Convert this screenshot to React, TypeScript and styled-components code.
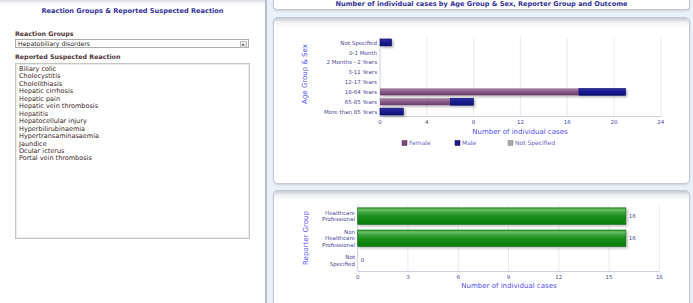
import React from 'react'
import styled, {createGlobalStyle} from 'styled-components'

const GlobalStyle = createGlobalStyle`
  html, body {
    margin: 0;
    padding: 0;
    background: #e9f1fa;
  }
  body {
    font-family: 'DejaVu Sans', Verdana, sans-serif;
    overflow: hidden;
  }
`

const Page = styled.div`
  display: flex;
  width: 693px;
  height: 303px;
  background: #e9f1fa;
  overflow: hidden;
`

const LeftPanel = styled.aside`
  width: 265px;
  flex-shrink: 0;
  display: flex;
  flex-direction: column;
  background: linear-gradient(#d6dae3 0, #fff 4px);
  border-right: 2px solid #b3bdcc;
`

const PanelTitle = styled.h2`
  margin: 0;
  font-size: 6.6px;
  line-height: 10px;
  font-weight: bold;
  color: #333399;
  text-align: center;
  white-space: nowrap;
`

const LeftTitle = styled(PanelTitle)`
  padding-top: 6px;
`

const Form = styled.div`
  display: flex;
  flex-direction: column;
  padding: 14px 0 0 15px;
`

const FieldLabel = styled.label<{$gap?: number}>`
  display: block;
  margin-top: ${({$gap}) => $gap ?? 0}px;
  font-size: 6.3px;
  line-height: 8px;
  font-weight: bold;
  color: #4e3636;
`

const SelectBox = styled.div`
  position: relative;
  width: 230px;
  height: 7px;
  margin-top: 1px;
  padding-left: 2px;
  border: 1px solid #a9a9a9;
  background: #fff;
  font-size: 6.2px;
  line-height: 7px;
  color: #2b1f1f;
`

const SelectArrow = styled.span`
  position: absolute;
  right: 1px;
  top: 1px;
  width: 5px;
  height: 5px;
  border: 1px solid #b8b8b8;
  background: linear-gradient(#f4f4f4, #d4d4d4);

  &::after {
    content: '';
    position: absolute;
    left: 1px;
    top: 2px;
    border-left: 1.5px solid transparent;
    border-right: 1.5px solid transparent;
    border-top: 2px solid #222;
  }
`

const ListBox = styled.ul`
  width: 230px;
  height: 172px;
  margin: 2px 0 0;
  padding: 2px 0 0 3px;
  list-style: none;
  border: 1px solid #c6c6c6;
  box-shadow: inset 0 0 0 1px #ececec;
  background: #fff;
`

const ListItem = styled.li`
  font-size: 6.5px;
  line-height: 7.45px;
  color: #3a2626;
  white-space: nowrap;
`

const RightColumn = styled.main`
  display: flex;
  flex-direction: column;
  width: 417px;
  margin-left: 6px;
`

const HeaderCard = styled.header`
  height: 11px;
  background: #fff;
  border: 1px solid #c3c8d2;
  border-top: none;
  border-radius: 0 0 4px 4px;
  box-shadow: 0 1px 2px rgba(60, 70, 90, 0.18);
`

const HeaderTitle = styled(PanelTitle)`
  line-height: 9px;
`

const ChartCard = styled.section<{$top: number; $height: number}>`
  margin-top: ${({$top}) => $top}px;
  height: ${({$height}) => $height}px;
  flex-shrink: 0;
  background: linear-gradient(#c4c9d4 0, #eef0f4 4px, #fff 9px);
  border: 1px solid #c3c8d2;
  border-radius: 5px;
  box-shadow: 0 1px 2px rgba(60, 70, 90, 0.18);
  overflow: hidden;

  svg {
    display: block;
  }
`

const REACTIONS = [
  'Biliary colic',
  'Cholecystitis',
  'Cholelithiasis',
  'Hepatic cirrhosis',
  'Hepatic pain',
  'Hepatic vein thrombosis',
  'Hepatitis',
  'Hepatocellular injury',
  'Hyperbilirubinaemia',
  'Hypertransaminasaemia',
  'Jaundice',
  'Ocular icterus',
  'Portal vein thrombosis',
]

const AGE_ROWS = [
  {label: 'Not Specified', female: 0, male: 1},
  {label: '0-1 Month', female: 0, male: 0},
  {label: '2 Months - 2 Years', female: 0, male: 0},
  {label: '3-11 Years', female: 0, male: 0},
  {label: '12-17 Years', female: 0, male: 0},
  {label: '18-64 Years', female: 17, male: 4},
  {label: '65-85 Years', female: 6, male: 2},
  {label: 'More than 85 Years', female: 0, male: 2},
]

const REPORTER_ROWS = [
  {lines: ['Healthcare', 'Professional'], value: 16},
  {lines: ['Non', 'Healthcare', 'Professional'], value: 16},
  {lines: ['Not', 'Specified'], value: 0},
]

const LABEL = '#4a4a96'
const AXIS_TITLE = '#4f4ff5'
const GRID = '#e3e4ec'
const AXIS = '#c2c4d4'

// card 1 content box starts at page (274, 20); viewBox in page coords
const AgeSexChart = () => {
  const x0 = 380
  const unit = 11.7
  const top = 39.5
  const row = 9.875
  const bottom = top + row * AGE_ROWS.length
  const barH = 7
  const ticks = [0, 4, 8, 12, 16, 20, 24]

  return (
    <svg width={415} height={165} viewBox="274 20 415 165">
      <defs>
        <linearGradient id="female" x1="0" y1="0" x2="0" y2="1">
          <stop offset="0" stopColor="#a585a5" />
          <stop offset="0.45" stopColor="#8a5e8a" />
          <stop offset="1" stopColor="#6a3c6a" />
        </linearGradient>
        <linearGradient id="male" x1="0" y1="0" x2="0" y2="1">
          <stop offset="0" stopColor="#3030a6" />
          <stop offset="0.5" stopColor="#1b1b8e" />
          <stop offset="1" stopColor="#0e0e78" />
        </linearGradient>
        <filter id="shadow1" x="-10%" y="-50%" width="130%" height="250%">
          <feDropShadow dx="1.5" dy="1.5" stdDeviation="0.8" floodColor="#000" floodOpacity="0.3" />
        </filter>
      </defs>

      {ticks.map(t => (
        <line key={t} x1={x0 + t * unit} x2={x0 + t * unit} y1={top} y2={bottom} stroke={t === 0 ? AXIS : GRID} strokeWidth={0.8} />
      ))}
      <line x1={x0} x2={x0 + 24 * unit} y1={bottom} y2={bottom} stroke={AXIS} strokeWidth={0.8} />

      {AGE_ROWS.map((r, i) => {
        const cy = top + row * i + row / 2
        const y = cy - barH / 2
        return (
          <g key={r.label}>
            <text x={377} y={cy + 2.2} textAnchor="end" fontSize={5.5} fill={LABEL}>
              {r.label}
            </text>
            {r.female + r.male > 0 && (
              <g filter="url(#shadow1)">
                {r.female > 0 && (
                  <rect x={x0} y={y} width={r.female * unit} height={barH} fill="url(#female)" />
                )}
                <rect x={x0 + r.female * unit} y={y} width={r.male * unit} height={barH} fill="url(#male)" stroke="#07075e" strokeWidth={0.5} />
              </g>
            )}
          </g>
        )
      })}

      {ticks.map(t => (
        <text key={t} x={x0 + t * unit} y={125.5} textAnchor="middle" fontSize={5.5} fill={LABEL}>
          {t}
        </text>
      ))}

      <text x={520} y={136.3} textAnchor="middle" fontSize={7} fill={AXIS_TITLE}>
        Number of individual cases
      </text>
      <text transform="translate(306.5 76) rotate(-90)" textAnchor="middle" fontSize={7} fill={AXIS_TITLE}>
        Age Group &amp; Sex
      </text>

      {[
        {x: 402, label: 'Female', fill: '#7a4a7a', stroke: '#5a2e5a'},
        {x: 455, label: 'Male', fill: '#1a1a8c', stroke: '#06065a'},
        {x: 508, label: 'Not Specified', fill: '#a8a8a8', stroke: '#8a8a8a'},
      ].map(l => (
        <g key={l.label}>
          <rect x={l.x} y={142.5} width={5} height={5} fill={l.fill} stroke={l.stroke} strokeWidth={0.5} />
          <text x={l.x + 7} y={147.3} fontSize={6} fill="#6565c4">
            {l.label}
          </text>
        </g>
      ))}
    </svg>
  )
}

// card 2 content box starts at page (274, 193)
const ReporterChart = () => {
  const x0 = 357.7
  const unit = 16.76
  const top = 207
  const row = 22.17
  const bottom = top + row * REPORTER_ROWS.length
  const barH = 16.5
  const ticks = [0, 3, 6, 9, 12, 15, 18]

  return (
    <svg width={415} height={118} viewBox="274 193 415 118">
      <defs>
        <linearGradient id="green" x1="0" y1="0" x2="0" y2="1">
          <stop offset="0" stopColor="#2e9a2e" />
          <stop offset="0.12" stopColor="#6cc06c" />
          <stop offset="0.3" stopColor="#3ba33b" />
          <stop offset="0.55" stopColor="#158c15" />
          <stop offset="1" stopColor="#0b7c0b" />
        </linearGradient>
        <filter id="shadow2" x="-5%" y="-30%" width="110%" height="170%">
          <feDropShadow dx="1.5" dy="1.5" stdDeviation="0.9" floodColor="#000" floodOpacity="0.28" />
        </filter>
      </defs>

      {ticks.map(t => (
        <line key={t} x1={x0 + t * unit} x2={x0 + t * unit} y1={top} y2={bottom} stroke={t === 0 ? AXIS : GRID} strokeWidth={0.8} />
      ))}
      <line x1={x0} x2={x0 + 18 * unit} y1={bottom} y2={bottom} stroke={AXIS} strokeWidth={0.8} />

      {REPORTER_ROWS.map((r, i) => {
        const cy = top + row * i + row / 2
        const first = cy - ((r.lines.length - 1) * 6.4) / 2
        return (
          <g key={r.lines.join(' ')}>
            {r.lines.map((ln, k) => (
              <text key={k} x={355} y={first + k * 6.4 + 2} textAnchor="end" fontSize={5.5} fill={LABEL}>
                {ln}
              </text>
            ))}
            {r.value > 0 && (
              <rect x={x0} y={cy - barH / 2} width={r.value * unit} height={barH} fill="url(#green)" stroke="#0a6a0a" strokeWidth={0.6} filter="url(#shadow2)" />
            )}
            <text x={x0 + r.value * unit + 3} y={cy + 2} fontSize={5.5} fill={LABEL}>
              {r.value}
            </text>
          </g>
        )
      })}

      {ticks.map(t => (
        <text key={t} x={x0 + t * unit} y={280.7} textAnchor="middle" fontSize={5.5} fill={LABEL}>
          {t}
        </text>
      ))}

      <text x={509} y={290.3} textAnchor="middle" fontSize={7} fill={AXIS_TITLE}>
        Number of individual cases
      </text>
      <text transform="translate(307.5 240) rotate(-90)" textAnchor="middle" fontSize={7} fill={AXIS_TITLE}>
        Reporter Group
      </text>
    </svg>
  )
}

const App = () => (
  <>
    <GlobalStyle />
    <Page>
      <LeftPanel>
        <LeftTitle>Reaction Groups &amp; Reported Suspected Reaction</LeftTitle>
        <Form>
          <FieldLabel>Reaction Groups</FieldLabel>
          <SelectBox>
            Hepatobiliary disorders
            <SelectArrow />
          </SelectBox>
          <FieldLabel $gap={5}>Reported Suspected Reaction</FieldLabel>
          <ListBox>
            {REACTIONS.map(r => (
              <ListItem key={r}>{r}</ListItem>
            ))}
          </ListBox>
        </Form>
      </LeftPanel>
      <RightColumn>
        <HeaderCard>
          <HeaderTitle>
            Number of individual cases by Age Group &amp; Sex, Reporter Group and Outcome
          </HeaderTitle>
        </HeaderCard>
        <ChartCard $top={7} $height={165}>
          <AgeSexChart />
        </ChartCard>
        <ChartCard $top={6} $height={118}>
          <ReporterChart />
        </ChartCard>
      </RightColumn>
    </Page>
  </>
)

export default App
